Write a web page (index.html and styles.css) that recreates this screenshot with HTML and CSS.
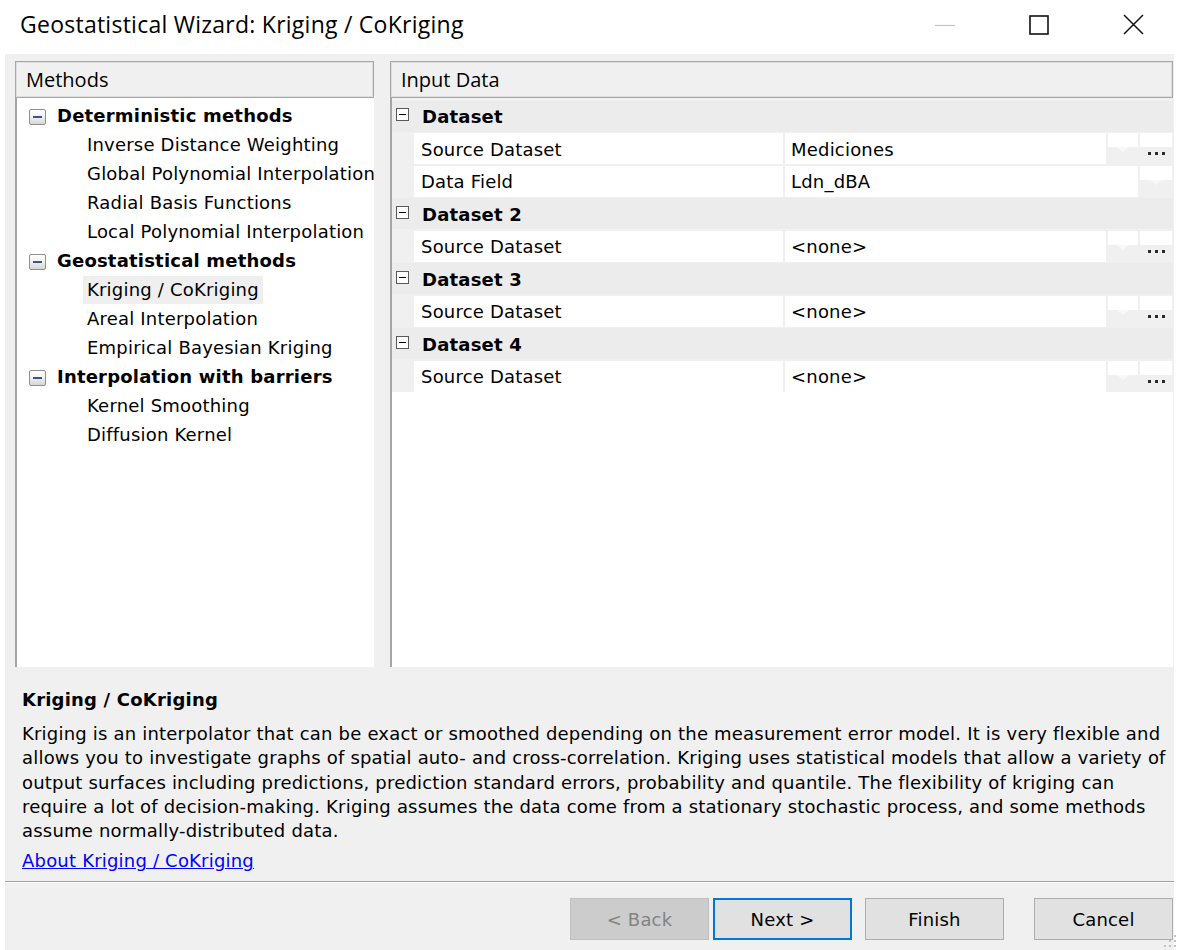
FILE: index.html
```html
<!DOCTYPE html>
<html lang="en">
<head>
<meta charset="utf-8">
<title>Geostatistical Wizard: Kriging / CoKriging</title>
<link rel="stylesheet" href="styles.css">
</head>
<body>
<div class="window">
  <header class="titlebar">
    <h1 class="title">Geostatistical Wizard: Kriging / CoKriging</h1>
    <div class="caption-buttons">
      <span class="cap-btn cap-min" title="Minimize">
        <svg width="20" height="20" viewBox="0 0 20 20"><line x1="0" y1="10.5" x2="20" y2="10.5" stroke="#c4c4c4" stroke-width="1.2"/></svg>
      </span>
      <span class="cap-btn cap-max" title="Maximize">
        <svg width="20" height="20" viewBox="0 0 20 20"><rect x="1" y="1" width="18" height="18" fill="none" stroke="#111" stroke-width="1.6"/></svg>
      </span>
      <span class="cap-btn cap-close" title="Close">
        <svg width="21" height="21" viewBox="0 0 21 21"><path d="M1 1 L20 20 M20 1 L1 20" stroke="#111" stroke-width="1.5" fill="none"/></svg>
      </span>
    </div>
  </header>

  <main class="client">
    <div class="panes">
      <section class="pane pane-methods">
        <div class="pane-header">Methods</div>
        <div class="pane-body">
          <ul class="tree">
            <li class="tree-row tree-cat"><span class="tv-toggle"></span>Deterministic methods</li>
            <li class="tree-row tree-leaf"><span class="tree-text">Inverse Distance Weighting</span></li>
            <li class="tree-row tree-leaf"><span class="tree-text">Global Polynomial Interpolation</span></li>
            <li class="tree-row tree-leaf"><span class="tree-text">Radial Basis Functions</span></li>
            <li class="tree-row tree-leaf"><span class="tree-text">Local Polynomial Interpolation</span></li>
            <li class="tree-row tree-cat"><span class="tv-toggle"></span>Geostatistical methods</li>
            <li class="tree-row tree-leaf"><span class="tree-text is-selected">Kriging / CoKriging</span></li>
            <li class="tree-row tree-leaf"><span class="tree-text">Areal Interpolation</span></li>
            <li class="tree-row tree-leaf"><span class="tree-text">Empirical Bayesian Kriging</span></li>
            <li class="tree-row tree-cat"><span class="tv-toggle"></span>Interpolation with barriers</li>
            <li class="tree-row tree-leaf"><span class="tree-text">Kernel Smoothing</span></li>
            <li class="tree-row tree-leaf"><span class="tree-text">Diffusion Kernel</span></li>
          </ul>
        </div>
      </section>

      <section class="pane pane-input">
        <div class="pane-header">Input Data</div>
        <div class="pane-body">
          <div class="propgrid">
            <div class="pg-cat"><span class="pg-toggle"></span>Dataset</div>
            <div class="pg-row">
              <span class="pg-margin"></span>
              <span class="pg-label">Source Dataset</span>
              <span class="pg-value">Mediciones</span>
              <span class="pg-drop"></span>
              <span class="pg-ellipsis"><svg width="17" height="3" viewBox="0 0 17 3"><rect x="0" y="0" width="3" height="3" fill="#2a2a2a"/><rect x="7" y="0" width="3" height="3" fill="#2a2a2a"/><rect x="14" y="0" width="3" height="3" fill="#2a2a2a"/></svg></span>
            </div>
            <div class="pg-row">
              <span class="pg-margin"></span>
              <span class="pg-label">Data Field</span>
              <span class="pg-value pg-value-wide">Ldn_dBA</span>
              <span class="pg-drop"></span>
            </div>

            <div class="pg-cat"><span class="pg-toggle"></span>Dataset 2</div>
            <div class="pg-row">
              <span class="pg-margin"></span>
              <span class="pg-label">Source Dataset</span>
              <span class="pg-value">&lt;none&gt;</span>
              <span class="pg-drop"></span>
              <span class="pg-ellipsis"><svg width="17" height="3" viewBox="0 0 17 3"><rect x="0" y="0" width="3" height="3" fill="#2a2a2a"/><rect x="7" y="0" width="3" height="3" fill="#2a2a2a"/><rect x="14" y="0" width="3" height="3" fill="#2a2a2a"/></svg></span>
            </div>

            <div class="pg-cat"><span class="pg-toggle"></span>Dataset 3</div>
            <div class="pg-row">
              <span class="pg-margin"></span>
              <span class="pg-label">Source Dataset</span>
              <span class="pg-value">&lt;none&gt;</span>
              <span class="pg-drop"></span>
              <span class="pg-ellipsis"><svg width="17" height="3" viewBox="0 0 17 3"><rect x="0" y="0" width="3" height="3" fill="#2a2a2a"/><rect x="7" y="0" width="3" height="3" fill="#2a2a2a"/><rect x="14" y="0" width="3" height="3" fill="#2a2a2a"/></svg></span>
            </div>

            <div class="pg-cat"><span class="pg-toggle"></span>Dataset 4</div>
            <div class="pg-row">
              <span class="pg-margin"></span>
              <span class="pg-label">Source Dataset</span>
              <span class="pg-value">&lt;none&gt;</span>
              <span class="pg-drop"></span>
              <span class="pg-ellipsis"><svg width="17" height="3" viewBox="0 0 17 3"><rect x="0" y="0" width="3" height="3" fill="#2a2a2a"/><rect x="7" y="0" width="3" height="3" fill="#2a2a2a"/><rect x="14" y="0" width="3" height="3" fill="#2a2a2a"/></svg></span>
            </div>
          </div>
        </div>
      </section>
    </div>

    <section class="description">
      <h2 class="desc-title">Kriging / CoKriging</h2>
      <p class="desc-text">Kriging is an interpolator that can be exact or smoothed depending on the measurement error model. It is very flexible and<br>allows you to investigate graphs of spatial auto- and cross-correlation. Kriging uses statistical models that allow a variety of<br>output surfaces including predictions, prediction standard errors, probability and quantile. The flexibility of kriging can<br>require a lot of decision-making. Kriging assumes the data come from a stationary stochastic process, and some methods<br>assume normally-distributed data.</p>
      <a class="desc-link" href="#">About Kriging / CoKriging</a>
    </section>

    <footer class="buttons">
      <button class="btn btn-back" disabled>&lt; Back</button>
      <button class="btn btn-next">Next &gt;</button>
      <button class="btn btn-finish">Finish</button>
      <button class="btn btn-cancel">Cancel</button>
    </footer>
  </main>

  <svg class="size-grip" width="14" height="14" viewBox="0 0 14 14">
    <rect x="11" y="1" width="2" height="2" fill="#c2c2c2"/>
    <rect x="11" y="6" width="2" height="2" fill="#c2c2c2"/>
    <rect x="6" y="6" width="2" height="2" fill="#c2c2c2"/>
    <rect x="11" y="11" width="2" height="2" fill="#c2c2c2"/>
    <rect x="6" y="11" width="2" height="2" fill="#c2c2c2"/>
    <rect x="1" y="11" width="2" height="2" fill="#c2c2c2"/>
  </svg>
</div>
</body>
</html>
```

FILE: styles.css
```css
* {
  box-sizing: border-box;
}

html,
body {
  margin: 0;
  padding: 0;
}

body {
  width: 1180px;
  height: 950px;
  overflow: hidden;
  background: #ffffff;
  color: #000000;
  font-family: "DejaVu Sans", Verdana, sans-serif;
  font-size: 18px;
  letter-spacing: 0.2px;
}

.window {
  position: relative;
  display: flex;
  flex-direction: column;
  height: 950px;
}

/* ---------- title bar ---------- */
.titlebar {
  flex: none;
  height: 54px;
  display: flex;
  align-items: center;
  padding-bottom: 5px;
  background: #ffffff;
}

.title {
  flex: 1;
  margin: 0 0 0 20px;
  font-family: "Open Sans", "Noto Sans", sans-serif;
  font-weight: 400;
  font-size: 23px;
  letter-spacing: 0.25px;
  line-height: 1;
  color: #000000;
}

.caption-buttons {
  display: flex;
  align-self: stretch;
}

.cap-btn {
  width: 94px;
  display: flex;
  align-items: center;
  justify-content: center;
}

/* ---------- client area ---------- */
.client {
  flex: 1;
  display: flex;
  flex-direction: column;
  margin: 0 6px 0 5px;
  background: #f0f0f0;
}

.panes {
  flex: none;
  display: flex;
  gap: 16px;
  height: 613px;
  padding: 7px 0 0 10px;
}

.pane {
  display: flex;
  flex-direction: column;
}

.pane-methods {
  width: 359px;
}

.pane-input {
  width: 783px;
}

.pane-header {
  flex: none;
  height: 37px;
  padding-left: 10px;
  border: 1px solid #a7a7a7;
  box-shadow: inset 0 0 0 1px #dedede;
  background: #f0f0f0;
  font-family: "Open Sans", "Noto Sans", sans-serif;
  font-size: 20px;
  letter-spacing: 0;
  line-height: 35px;
}

.pane-body {
  flex: 1;
  background: #ffffff;
  border-left: 2px solid #a5a5a5;
}

/* ---------- methods tree ---------- */
.tree {
  list-style: none;
  margin: 0;
  padding: 3.5px 0 0;
}

.tree-row {
  height: 29px;
  display: flex;
  align-items: center;
  white-space: nowrap;
  line-height: 28px;
}

.tree-cat {
  padding-left: 12px;
  font-weight: 700;
}

.tv-toggle {
  position: relative;
  flex: none;
  width: 17px;
  height: 16px;
  margin: 2px 11px 0 0;
  border: 1px solid #8f8f8f;
  border-radius: 2px;
  background: linear-gradient(#ffffff, #f2f2f2 45%, #d6d6d6);
}

.tv-toggle::after {
  content: "";
  position: absolute;
  left: 3px;
  top: 6px;
  width: 9px;
  height: 2px;
  background: #3d4f9e;
}

.tree-leaf {
  padding-left: 66px;
}

.tree-text {
  padding: 0 4px;
}

.tree-text.is-selected {
  background: #efefef;
}

/* ---------- property grid ---------- */
.propgrid {
  display: flex;
  flex-direction: column;
  gap: 1.5px;
  padding-top: 2.5px;
  background: #f0f0f0;
}

.pg-cat {
  height: 31px;
  display: flex;
  align-items: center;
  padding-left: 4px;
  padding-top: 1px;
  background: #ececec;
  font-weight: 700;
}

.pg-toggle {
  position: relative;
  flex: none;
  width: 13px;
  height: 13px;
  margin: -4px 13px 0 0;
  border: 1px solid #5a5a5a;
  background: #ffffff;
}

.pg-toggle::after {
  content: "";
  position: absolute;
  left: 2px;
  top: 5px;
  width: 7px;
  height: 1px;
  background: #000000;
}

.pg-row {
  height: 31px;
  display: grid;
  grid-template-columns: 20px 369px 321px 30px 32px;
  column-gap: 2px;
  white-space: nowrap;
}

.pg-margin {
  background: #f0f0f0;
}

.pg-label,
.pg-value {
  display: flex;
  align-items: center;
  padding-top: 1px;
  background: #ffffff;
}

.pg-label {
  padding-left: 7px;
}

.pg-value {
  padding-left: 6px;
}

.pg-value-wide {
  grid-column: span 2;
}

.pg-drop,
.pg-ellipsis {
  position: relative;
  background: linear-gradient(#ffffff 0 14px, #f0f0f0 14px);
}

.pg-drop::after {
  content: "";
  position: absolute;
  left: 50%;
  top: 14px;
  margin-left: -6px;
  border-left: 6px solid transparent;
  border-right: 6px solid transparent;
  border-top: 5px solid #f8f8f8;
}

.pg-ellipsis {
  display: flex;
  align-items: flex-end;
  justify-content: center;
  padding-bottom: 9px;
}

.pg-ellipsis svg {
  display: block;
}

/* ---------- description ---------- */
.description {
  flex: none;
  height: 214px;
  padding: 21px 0 0 17px;
}

.desc-title {
  margin: 0 0 10px;
  font-size: 18px;
  font-weight: 700;
  line-height: 24px;
}

.desc-text {
  margin: 0;
  line-height: 24.3px;
  white-space: nowrap;
}

.desc-link {
  display: inline-block;
  margin-top: 6px;
  line-height: 24px;
  color: #0000ff;
  text-decoration: underline;
}

/* ---------- wizard buttons ---------- */
.buttons {
  flex: 1;
  display: flex;
  align-items: flex-start;
  justify-content: flex-end;
  padding: 16px 1px 0 0;
  border-top: 1px solid #a0a0a0;
  box-shadow: inset 0 1px #ffffff;
}

.btn {
  width: 139px;
  height: 42px;
  padding: 0;
  border: 1px solid #adadad;
  background: #e1e1e1;
  color: #000000;
  font-family: "DejaVu Sans", Verdana, sans-serif;
  font-size: 18px;
  letter-spacing: 0.2px;
}

.btn-back {
  background: #cccccc;
  border-color: #bfbfbf;
  color: #838383;
}

.btn-next {
  margin-left: 4px;
  border: 2px solid #0078d7;
}

.btn-finish {
  margin-left: 13px;
}

.btn-cancel {
  margin-left: 30px;
}

.size-grip {
  position: absolute;
  right: 3px;
  bottom: 2px;
}
```
